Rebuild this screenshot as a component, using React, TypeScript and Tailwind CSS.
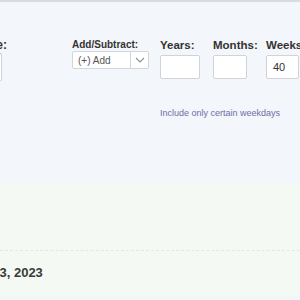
import React from "react";

export default function App() {
  return (
    <div className="w-[300px] h-[300px] overflow-hidden bg-[#f3f6fa] font-['Liberation_Sans',Arial,sans-serif] text-[#333]">
      <div className="h-[2px] bg-[#d6dce3]" />

      {/* Calculator form */}
      <div className="h-[181px] bg-[#f3f6fa] pt-[36px]">
        <div className="flex">
          {/* start date column (cut off on the left) */}
          <div className="-ml-[60px] w-[62px] shrink-0">
            <div className="text-[12px] font-bold leading-[14px] text-right mr-[-5px]">Start Date:</div>
            <div className="mt-[1px] h-[28px] rounded-[2px] border border-[#cfd4da] border-t-[#e9a3a3] bg-white" />
          </div>

          <div className="ml-[70px] w-[77px] shrink-0 pt-[1px]">
            <div className="text-[10px] font-bold leading-[12px]">Add/Subtract:</div>
            <div className="flex h-[18px] items-center rounded-[2px] border border-[#d2d6dc] bg-white">
              <span className="flex-1 pl-[5px] text-[10px] text-[#555]">(+) Add</span>
              <span className="flex h-full w-[18px] items-center justify-center border-l border-[#d2d6dc]">
                <svg width="10" height="6" viewBox="0 0 10 6" fill="none" stroke="#8a8f96" strokeWidth="1.1">
                  <path d="M1 1l4 4 4-4" />
                </svg>
              </span>
            </div>
          </div>

          <div className="ml-[11px] flex">
            <Field label="Years:" w="w-[40px]" col="w-[53px]" />
            <Field label="Months:" w="w-[34px]" col="w-[53px]" />
            <Field label="Weeks:" w="w-[33px]" col="w-[40px]" value="40" />
          </div>
        </div>
        <div className="ml-[160px] mt-[27px] text-[9px] leading-[11px] text-[#6d6ea9]">
          Include only certain weekdays
        </div>
      </div>

      {/* Result */}
      <div className="h-[112px] bg-[#f4f9f3] pt-[67px]">
        <div className="border-t border-dashed border-[#e4e8e4]" />
        <div className="-ml-[67px] mt-[14px] text-[13px] font-bold leading-[15px] text-[#3a3a3a] whitespace-nowrap">
          December 3, 2023
        </div>
      </div>
      <div className="h-[5px] bg-[#f2f6f8]" />
    </div>
  );
}

function Field({ label, w, col, value }: { label: string; w: string; col: string; value?: string }) {
  return (
    <div className={`shrink-0 ${col}`}>
      <div className="text-[11.5px] font-bold leading-[14px] whitespace-nowrap">{label}</div>
      <div className={`mt-[3px] h-[24px] ${w} rounded-[2px] border border-[#cfd4da] bg-white pl-[6px] text-[11px] leading-[22px] text-[#333]`}>
        {value}
      </div>
    </div>
  );
}
